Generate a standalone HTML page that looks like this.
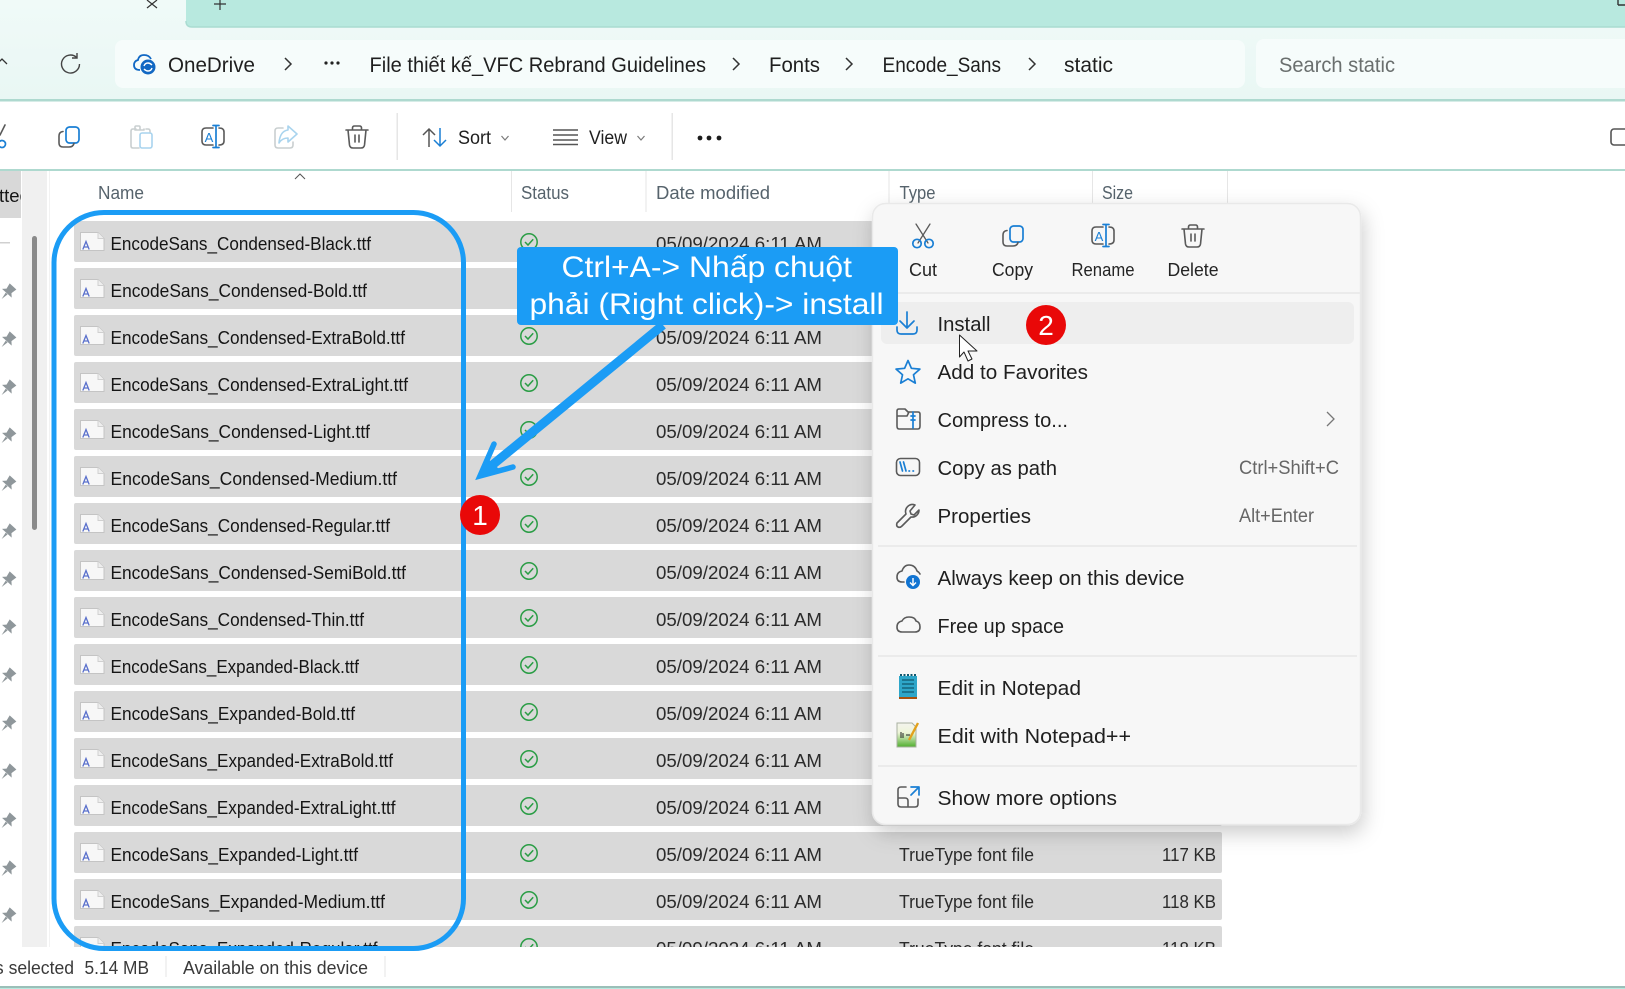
<!DOCTYPE html>
<html lang="vi"><head><meta charset="utf-8"><title>static</title>
<style>
html,body{margin:0;padding:0;background:#fff;width:1625px;height:989px;overflow:hidden}
svg{display:block;font-family:"Liberation Sans","Noto Sans CJK SC",sans-serif}
text{fill:#1c1c1c}
.a{font-size:21px;fill:#1f1f1f}
.h{font-size:18px;fill:#56636c}
.n{font-size:18.5px;fill:#151515}
.d{font-size:18.5px;fill:#2b2b2b}
.m{font-size:20.5px;fill:#1f1f1f}
.t{font-size:18px;fill:#242424}
.s{font-size:19px;fill:#666}
.b{font-size:18px;fill:#3a3a3a}
.c{font-size:30px;fill:#fff}
.i{fill:none;stroke:#5a5a5a;stroke-width:1.6;stroke-linecap:round;stroke-linejoin:round}
.u{fill:none;stroke:#1a7fd4;stroke-width:1.7;stroke-linecap:round;stroke-linejoin:round}
.l{fill:none;stroke:#c9cfd0;stroke-width:1.6;stroke-linecap:round;stroke-linejoin:round}
.lb{fill:none;stroke:#a9d4ee;stroke-width:1.6;stroke-linecap:round;stroke-linejoin:round}
</style></head><body>
<svg width="1625" height="989" viewBox="0 0 1625 989" xmlns="http://www.w3.org/2000/svg">
<defs>
<linearGradient id="tb" x1="0" y1="0" x2="0" y2="1"><stop offset="0" stop-color="#f0faf8"/><stop offset="1" stop-color="#e9f7f4"/></linearGradient>
<linearGradient id="npp" x1="0" y1="0" x2="0" y2="1"><stop offset="0" stop-color="#f4f4ee"/><stop offset=".4" stop-color="#eef5d8"/><stop offset="1" stop-color="#4fae2e"/></linearGradient>
<clipPath id="list"><rect x="48" y="170" width="1200" height="777"/></clipPath>
<clipPath id="side"><rect x="0" y="171" width="21" height="47"/></clipPath>
<filter id="sh" x="-10%" y="-10%" width="120%" height="120%"><feDropShadow dx="2" dy="8" stdDeviation="10" flood-color="#000" flood-opacity=".2"/></filter>
<g id="pin"><path fill="#8f979b" d="M-4.5,-7.5 h9 l-1.2,6 l3.2,3.2 h-13 l3.2,-3.2z M-1.3,2 h2.6 l-1.3,7.5z" transform="rotate(42)"/></g>
<g id="file"><path d="M80.5,232.5 H98 L104,238.5 V250.5 H80.5Z" fill="#f7f7f7" stroke="#c4c4c4"/><path d="M98,232.5 V238.5 H104" fill="#eee" stroke="#d0d0d0"/><path d="M82.8,249.5 L86,241.5 L89.2,249.5 M84,247 H88" fill="none" stroke="#5a70cc" stroke-width="1.3"/></g>
<g id="ok"><circle cx="529" cy="0" r="8.2" fill="none" stroke="#2a9d45" stroke-width="1.5"/><path d="M525,0 L528,3 L533.2,-2.8" fill="none" stroke="#2a9d45" stroke-width="1.5"/></g>
<g id="copy"><rect x="-3" y="-10" width="13" height="16" rx="3.5" class="u"/><path class="i" d="M-6,-5.5 Q-10,-5 -10,-1 V6 Q-10,10 -6,10 H0 Q4,10 5,6.5"/></g>
<g id="ren"><path class="i" d="M0,-9 H-7 Q-11,-9 -11,-5 V4 Q-11,8 -7,8 H0 M6,-9 Q11,-9 11,-5 V4 Q11,8 6,8"/><path class="u" d="M3,-11.5 V10.5 M0,-11.5 H6 M0,10.5 H6"/></g>
<g id="del"><path class="i" d="M-11,-7 H11 M-4.5,-7 V-9 Q-4.5,-11 -2.5,-11 H2.5 Q4.5,-11 4.5,-9 V-7 M-9,-7 L-7.5,8 Q-7,11 -4,11 H4 Q7,11 7.5,8 L9,-7 M-2,-2 V5 M2,-2 V5"/></g>
<g id="caret"><path d="M-3.5,-2 L0,2 L3.5,-2" fill="none" stroke="#7a7a7a" stroke-width="1.2"/></g>
<g id="chev"><path d="M-3,-6 L3,0 L-3,6" fill="none" stroke="#333" stroke-width="1.5"/></g>
</defs>

<!-- title bar -->
<rect width="1625" height="101" fill="url(#tb)"/>
<path d="M186,0 H1625 V27 H192 Q186,27 186,21Z" fill="#b8e9df"/>
<path d="M186,21 Q186,27 192,27 H1625" fill="none" stroke="#a9dcd1" stroke-width="1.5"/>
<path d="M147,0 L157,8 M157,0 L147,8" stroke="#333" stroke-width="1.2" fill="none"/>
<path d="M220,0 V10 M214,4 H226" stroke="#333" stroke-width="1.2" fill="none"/>
<path d="M1618,5 V0 M1618,5 H1625" stroke="#333" stroke-width="1.4" fill="none"/>

<!-- nav -->
<path d="M-3,64 L2,59 L7,64" fill="none" stroke="#333" stroke-width="1.3"/>
<path d="M76.5,57.3 A9,9 0 1 0 79.5,64" fill="none" stroke="#444" stroke-width="1.4"/>
<path d="M77,53 V58 H72" fill="none" stroke="#444" stroke-width="1.4"/>
<rect x="115" y="40" width="1130" height="48" rx="8" fill="#f6fcfb"/>
<rect x="1256" y="39" width="400" height="49" rx="8" fill="#f6fcfb"/>
<path d="M140,70 Q134,70 134,65 Q134,61 138,60 Q139,55 144,55 Q149,55 151,59" fill="none" stroke="#1168c4" stroke-width="1.8"/>
<circle cx="148" cy="67" r="7.5" fill="#1268c3"/>
<path d="M144,66 Q145,63 148,63 Q150,63 152,65 M152,68 Q151,71 148,71 Q146,71 144,69" fill="none" stroke="#fff" stroke-width="1.4"/>
<text x="168" y="72" class="a" textLength="87" lengthAdjust="spacingAndGlyphs">OneDrive</text>
<use href="#chev" x="288" y="64"/>
<circle cx="326" cy="63" r="1.6" fill="#222"/><circle cx="332" cy="63" r="1.6" fill="#222"/><circle cx="338" cy="63" r="1.6" fill="#222"/>
<text x="369.5" y="72" class="a" textLength="336.5" lengthAdjust="spacingAndGlyphs">File thiết kế_VFC Rebrand Guidelines</text>
<use href="#chev" x="736" y="64"/>
<text x="769" y="72" class="a" textLength="51" lengthAdjust="spacingAndGlyphs">Fonts</text>
<use href="#chev" x="849" y="64"/>
<text x="882.5" y="72" class="a" textLength="118.5" lengthAdjust="spacingAndGlyphs">Encode_Sans</text>
<use href="#chev" x="1032" y="64"/>
<text x="1064" y="72" class="a" textLength="49" lengthAdjust="spacingAndGlyphs">static</text>
<text x="1279" y="72" class="a" style="fill:#6a6f6e" textLength="116" lengthAdjust="spacingAndGlyphs">Search static</text>
<rect y="99" width="1625" height="2.5" fill="#aed9cf"/>

<!-- toolbar -->
<rect y="101.5" width="1625" height="67.5" fill="#fff"/>
<path d="M5,125 L0,135" class="i"/><circle cx="2" cy="144" r="3.5" class="u"/>
<use href="#copy" x="69" y="137"/>
<g class="l"><path d="M136,129 H133 Q131,129 131,131 V146 Q131,148 133,148 H139"/><path d="M140,129 V127 Q140,126 139,126 H136 Q135,126 135,127 V130 H144 V129"/><path d="M146,129 H148 Q150,129 150,131 V133"/></g>
<rect x="140" y="133" width="12" height="15" rx="2" class="lb"/>
<use href="#ren" x="213" y="137"/>
<text x="209" y="142" style="font-size:13px;fill:#1a7fd4" text-anchor="middle">A</text>
<path class="l" d="M283,128 H278 Q275,128 275,131 V145 Q275,148 278,148 H290 Q293,148 293,145 V142"/>
<path class="lb" d="M288,126 L297,134 L288,142 V138 Q282,138 279,143 Q280,131 288,130Z"/>
<use href="#del" x="357" y="137"/>
<rect x="396.5" y="113" width="1.5" height="47" fill="#e6e6e6"/>
<path d="M429,147 V129 M423,135 L429,129 L435,135" fill="none" stroke="#555" stroke-width="1.5"/>
<path d="M440,128 V146 M434,140 L440,146 L446,140" fill="none" stroke="#1a7fd4" stroke-width="1.5"/>
<text x="458" y="144" class="a" style="font-size:19px" textLength="33" lengthAdjust="spacingAndGlyphs">Sort</text>
<use href="#caret" x="505" y="138"/>
<path d="M553,130 H578 M553,135 H578 M553,140 H578 M553,144.5 H578" stroke="#555" stroke-width="1.4" fill="none"/>
<text x="589" y="144" class="a" style="font-size:19px" textLength="38" lengthAdjust="spacingAndGlyphs">View</text>
<use href="#caret" x="641" y="138"/>
<rect x="671.5" y="113" width="1.5" height="47" fill="#e6e6e6"/>
<circle cx="700" cy="138" r="2.4" fill="#1c1c1c"/><circle cx="709" cy="138" r="2.4" fill="#1c1c1c"/><circle cx="719" cy="138" r="2.4" fill="#1c1c1c"/>
<rect x="1611" y="129" width="20" height="16" rx="3" fill="none" stroke="#555" stroke-width="1.6"/>
<rect y="169" width="1625" height="2" fill="#aed9cf"/>

<!-- sidebar -->
<rect x="22" y="171" width="25" height="776" fill="#f0f0f0"/>
<rect x="49" y="171" width="1" height="776" fill="#f2f2f2"/>
<rect x="0" y="171" width="21" height="47" fill="#d8d8d8"/>
<g clip-path="url(#side)"><text x="-1" y="202" class="n">tted</text></g>
<rect x="0" y="242" width="10" height="1.5" fill="#d0d0d0"/>
<rect x="32" y="236" width="5" height="294" rx="2.5" fill="#8a8a8a"/>
<g transform="translate(-1,1)"><use href="#pin" x="9" y="291"/><use href="#pin" x="9" y="339"/><use href="#pin" x="9" y="387"/><use href="#pin" x="9" y="435"/><use href="#pin" x="9" y="483"/><use href="#pin" x="9" y="531"/><use href="#pin" x="9" y="579"/><use href="#pin" x="9" y="627"/><use href="#pin" x="9" y="675"/><use href="#pin" x="9" y="723"/><use href="#pin" x="9" y="771"/><use href="#pin" x="9" y="820"/><use href="#pin" x="9" y="868"/><use href="#pin" x="9" y="915"/></g>

<!-- header -->
<path d="M295,179 L300,174 L305,179" fill="none" stroke="#555" stroke-width="1"/>
<text x="98" y="199" class="h" textLength="46" lengthAdjust="spacingAndGlyphs">Name</text>
<text x="521" y="199" class="h" textLength="48" lengthAdjust="spacingAndGlyphs">Status</text>
<text x="656" y="199" class="h" textLength="114" lengthAdjust="spacingAndGlyphs">Date modified</text>
<text x="899.5" y="199" class="h" textLength="36" lengthAdjust="spacingAndGlyphs">Type</text>
<text x="1102" y="199" class="h" textLength="31" lengthAdjust="spacingAndGlyphs">Size</text>
<path d="M511.5,171 V212 M646,171 V212 M889,171 V212 M1092.5,171 V212 M1227.5,171 V212" stroke="#e6e6e6" stroke-width="1"/>

<!-- rows -->
<g clip-path="url(#list)">
<g fill="#d9d9d9">
<rect x="74" y="221" width="1148" height="41" rx="2"/><rect x="74" y="268" width="1148" height="41" rx="2"/><rect x="74" y="315" width="1148" height="41" rx="2"/><rect x="74" y="362" width="1148" height="41" rx="2"/><rect x="74" y="409" width="1148" height="41" rx="2"/><rect x="74" y="456" width="1148" height="41" rx="2"/><rect x="74" y="503" width="1148" height="41" rx="2"/><rect x="74" y="550" width="1148" height="41" rx="2"/><rect x="74" y="597" width="1148" height="41" rx="2"/><rect x="74" y="644" width="1148" height="41" rx="2"/><rect x="74" y="691" width="1148" height="41" rx="2"/><rect x="74" y="738" width="1148" height="41" rx="2"/><rect x="74" y="785" width="1148" height="41" rx="2"/><rect x="74" y="832" width="1148" height="41" rx="2"/><rect x="74" y="879" width="1148" height="41" rx="2"/><rect x="74" y="926" width="1148" height="41" rx="2"/>
</g>
<use href="#file"/><use href="#file" y="47"/><use href="#file" y="94"/><use href="#file" y="141"/><use href="#file" y="188"/><use href="#file" y="235"/><use href="#file" y="282"/><use href="#file" y="329"/><use href="#file" y="376"/><use href="#file" y="423"/><use href="#file" y="470"/><use href="#file" y="517"/><use href="#file" y="564"/><use href="#file" y="611"/><use href="#file" y="658"/><use href="#file" y="705"/>
<use href="#ok" y="242"/><use href="#ok" y="289"/><use href="#ok" y="336"/><use href="#ok" y="383"/><use href="#ok" y="430"/><use href="#ok" y="477"/><use href="#ok" y="524"/><use href="#ok" y="571"/><use href="#ok" y="618"/><use href="#ok" y="665"/><use href="#ok" y="712"/><use href="#ok" y="759"/><use href="#ok" y="806"/><use href="#ok" y="853"/><use href="#ok" y="900"/><use href="#ok" y="947"/>
<text x="110.5" y="250" class="n" textLength="260.5" lengthAdjust="spacingAndGlyphs">EncodeSans_Condensed-Black.ttf</text>
<text x="110.5" y="297" class="n" textLength="256.5" lengthAdjust="spacingAndGlyphs">EncodeSans_Condensed-Bold.ttf</text>
<text x="110.5" y="344" class="n" textLength="294.5" lengthAdjust="spacingAndGlyphs">EncodeSans_Condensed-ExtraBold.ttf</text>
<text x="110.5" y="391" class="n" textLength="297.5" lengthAdjust="spacingAndGlyphs">EncodeSans_Condensed-ExtraLight.ttf</text>
<text x="110.5" y="438" class="n" textLength="259.5" lengthAdjust="spacingAndGlyphs">EncodeSans_Condensed-Light.ttf</text>
<text x="110.5" y="485" class="n" textLength="286.5" lengthAdjust="spacingAndGlyphs">EncodeSans_Condensed-Medium.ttf</text>
<text x="110.5" y="532" class="n" textLength="279.5" lengthAdjust="spacingAndGlyphs">EncodeSans_Condensed-Regular.ttf</text>
<text x="110.5" y="579" class="n" textLength="295.5" lengthAdjust="spacingAndGlyphs">EncodeSans_Condensed-SemiBold.ttf</text>
<text x="110.5" y="626" class="n" textLength="253.5" lengthAdjust="spacingAndGlyphs">EncodeSans_Condensed-Thin.ttf</text>
<text x="110.5" y="673" class="n" textLength="248.5" lengthAdjust="spacingAndGlyphs">EncodeSans_Expanded-Black.ttf</text>
<text x="110.5" y="720" class="n" textLength="244.5" lengthAdjust="spacingAndGlyphs">EncodeSans_Expanded-Bold.ttf</text>
<text x="110.5" y="767" class="n" textLength="282.5" lengthAdjust="spacingAndGlyphs">EncodeSans_Expanded-ExtraBold.ttf</text>
<text x="110.5" y="814" class="n" textLength="285" lengthAdjust="spacingAndGlyphs">EncodeSans_Expanded-ExtraLight.ttf</text>
<text x="110.5" y="861" class="n" textLength="247.5" lengthAdjust="spacingAndGlyphs">EncodeSans_Expanded-Light.ttf</text>
<text x="110.5" y="908" class="n" textLength="274.5" lengthAdjust="spacingAndGlyphs">EncodeSans_Expanded-Medium.ttf</text>
<text x="110.5" y="955" class="n" textLength="267" lengthAdjust="spacingAndGlyphs">EncodeSans_Expanded-Regular.ttf</text>
<text x="656" y="250" class="d" textLength="166" lengthAdjust="spacingAndGlyphs">05/09/2024 6:11 AM</text>
<text x="656" y="344" class="d" textLength="166" lengthAdjust="spacingAndGlyphs">05/09/2024 6:11 AM</text>
<text x="656" y="391" class="d" textLength="166" lengthAdjust="spacingAndGlyphs">05/09/2024 6:11 AM</text>
<text x="656" y="438" class="d" textLength="166" lengthAdjust="spacingAndGlyphs">05/09/2024 6:11 AM</text>
<text x="656" y="485" class="d" textLength="166" lengthAdjust="spacingAndGlyphs">05/09/2024 6:11 AM</text>
<text x="656" y="532" class="d" textLength="166" lengthAdjust="spacingAndGlyphs">05/09/2024 6:11 AM</text>
<text x="656" y="579" class="d" textLength="166" lengthAdjust="spacingAndGlyphs">05/09/2024 6:11 AM</text>
<text x="656" y="626" class="d" textLength="166" lengthAdjust="spacingAndGlyphs">05/09/2024 6:11 AM</text>
<text x="656" y="673" class="d" textLength="166" lengthAdjust="spacingAndGlyphs">05/09/2024 6:11 AM</text>
<text x="656" y="720" class="d" textLength="166" lengthAdjust="spacingAndGlyphs">05/09/2024 6:11 AM</text>
<text x="656" y="767" class="d" textLength="166" lengthAdjust="spacingAndGlyphs">05/09/2024 6:11 AM</text>
<text x="656" y="814" class="d" textLength="166" lengthAdjust="spacingAndGlyphs">05/09/2024 6:11 AM</text>
<text x="656" y="861" class="d" textLength="166" lengthAdjust="spacingAndGlyphs">05/09/2024 6:11 AM</text>
<text x="656" y="908" class="d" textLength="166" lengthAdjust="spacingAndGlyphs">05/09/2024 6:11 AM</text>
<text x="656" y="955" class="d" textLength="166" lengthAdjust="spacingAndGlyphs">05/09/2024 6:11 AM</text>
<text x="899" y="861" class="d" textLength="135" lengthAdjust="spacingAndGlyphs">TrueType font file</text>
<text x="899" y="908" class="d" textLength="135" lengthAdjust="spacingAndGlyphs">TrueType font file</text>
<text x="899" y="955" class="d" textLength="135" lengthAdjust="spacingAndGlyphs">TrueType font file</text>
<text x="1162" y="861" class="d" textLength="54" lengthAdjust="spacingAndGlyphs">117 KB</text>
<text x="1162" y="908" class="d" textLength="54" lengthAdjust="spacingAndGlyphs">118 KB</text>
<text x="1162" y="955" class="d" textLength="54" lengthAdjust="spacingAndGlyphs">118 KB</text>
</g>

<!-- status bar -->
<text x="-9" y="974" class="b" textLength="83" lengthAdjust="spacingAndGlyphs">is selected</text>
<text x="84.5" y="974" class="b" textLength="64.5" lengthAdjust="spacingAndGlyphs">5.14 MB</text>
<rect x="165.5" y="956" width="1" height="21" fill="#e6e6e6"/>
<text x="183" y="974" class="b" textLength="185" lengthAdjust="spacingAndGlyphs">Available on this device</text>
<rect x="384.5" y="956" width="1" height="21" fill="#e6e6e6"/>
<rect y="986" width="1625" height="2" fill="#9bbfb8"/>
<rect y="988" width="1625" height="1" fill="#b8e9df"/>

<!-- context menu -->
<rect x="872.5" y="203.5" width="488" height="621" rx="13" fill="#f7f7f7" stroke="#e9e9e9" stroke-width="1.5" filter="url(#sh)"/>
<path class="i" d="M916,224 L928,243 M930,224 L918,243" style="stroke-width:1.3"/>
<circle cx="917" cy="243.5" r="4.2" class="u"/><circle cx="929" cy="243.5" r="4.2" class="u"/>
<text x="909" y="276" class="t" textLength="28" lengthAdjust="spacingAndGlyphs">Cut</text>
<use href="#copy" x="1013" y="236"/>
<text x="992" y="276" class="t" textLength="41" lengthAdjust="spacingAndGlyphs">Copy</text>
<use href="#ren" x="1103" y="236"/>
<text x="1099" y="241" style="font-size:13px;fill:#1a7fd4" text-anchor="middle">A</text>
<text x="1071.5" y="276" class="t" textLength="63" lengthAdjust="spacingAndGlyphs">Rename</text>
<use href="#del" x="1193" y="236"/>
<text x="1167.5" y="276" class="t" textLength="51" lengthAdjust="spacingAndGlyphs">Delete</text>
<rect x="873" y="292" width="487" height="2" fill="#ebebeb"/>
<rect x="881" y="302" width="473" height="42" rx="6" fill="#eeeeee"/>

<path class="u" d="M907,312 V328 M900,321 L907,328 L914,321 M897,327 V330 Q897,334 901,334 H913 Q917,334 917,330 V327"/>
<text x="937.5" y="331" class="m" textLength="53" lengthAdjust="spacingAndGlyphs">Install</text>
<polygon class="u" points="908,360.5 911.4,368.3 919.9,369.1 913.5,374.8 915.3,383.1 908,378.8 900.7,383.1 902.5,374.8 896.1,369.1 904.6,368.3"/>
<text x="937.5" y="379" class="m" textLength="150.5" lengthAdjust="spacingAndGlyphs">Add to Favorites</text>
<path class="i" d="M897,426 V411 Q897,409 899,409 H905 L908,412 H918 Q920,412 920,414 V426 Q920,429 918,429 H899 Q897,429 897,426Z M897,416 H907 L909,412"/>
<path class="u" d="M913,412 V428 M911,416 H915 M911,420 H915"/>
<text x="937.5" y="427" class="m" textLength="130.5" lengthAdjust="spacingAndGlyphs">Compress to...</text>
<path d="M1327,412 L1334,419 L1327,426" fill="none" stroke="#777" stroke-width="1.3"/>
<rect x="896.5" y="458.5" width="23" height="17" rx="4" class="i"/>
<path class="u" d="M900,462 L902.5,471 M903.5,462 L906,471 M909,471 H909.5 M913,471 H913.5"/>
<text x="937.5" y="475" class="m" textLength="119.5" lengthAdjust="spacingAndGlyphs">Copy as path</text>
<text x="1239" y="474" class="s" textLength="100" lengthAdjust="spacingAndGlyphs">Ctrl+Shift+C</text>
<path class="i" d="M919,510 L914,515 L911,514 L910,511 L915,505 A7,7 0 0 0 906,514 L897,523 Q896,526 898,527 Q900,528 902,526 L911,517 A7,7 0 0 0 919,510Z"/>
<text x="937.5" y="523" class="m" textLength="93.5" lengthAdjust="spacingAndGlyphs">Properties</text>
<text x="1239" y="522" class="s" textLength="75" lengthAdjust="spacingAndGlyphs">Alt+Enter</text>
<rect x="878" y="545" width="479" height="2" fill="#ebebeb"/>

<path class="i" d="M904,582 H902 Q897,582 897,577 Q897,572 902,571 Q904,565 909,565 Q915,565 917,571 Q919,572 920,574"/>
<circle cx="913" cy="582" r="7" fill="#1174d2"/><path d="M913,578 V585 M910,582.5 L913,585.5 L916,582.5" fill="none" stroke="#fff" stroke-width="1.4"/>
<text x="937.5" y="585" class="m" textLength="247" lengthAdjust="spacingAndGlyphs">Always keep on this device</text>
<path class="i" d="M902,632 Q897,632 897,627 Q897,622 902,621 Q904,617 909,617 Q915,617 916,621 Q920,622 920,627 Q920,632 915,632Z"/>
<text x="937.5" y="633" class="m" textLength="126.5" lengthAdjust="spacingAndGlyphs">Free up space</text>
<rect x="878" y="655" width="479" height="2" fill="#ebebeb"/>

<rect x="899" y="676" width="18" height="21" fill="#2ea6c9"/>
<rect x="899" y="697" width="18" height="2" fill="#a8510f"/>
<path d="M902,680 H914 M902,684 H914 M902,688 H914 M902,692 H914" stroke="#10586f" stroke-width="1.3"/>
<path d="M900,675 H916" stroke="#10586f" stroke-width="2" stroke-dasharray="2 1.5"/>
<text x="937.5" y="695" class="m" textLength="143.5" lengthAdjust="spacingAndGlyphs">Edit in Notepad</text>
<path d="M897,723 H912 L916,727 V747 H897Z" fill="url(#npp)" stroke="#a8b0a0"/>
<path d="M901,732 V738 M903,733 V738 M906,735 H910" stroke="#222" stroke-width="1"/>
<path d="M918,723 L909,740" stroke="#e2a11c" stroke-width="2.4"/>
<text x="937.5" y="743" class="m" textLength="193.5" lengthAdjust="spacingAndGlyphs">Edit with Notepad++</text>
<rect x="878" y="765" width="479" height="2" fill="#ebebeb"/>

<path class="i" d="M906,787 H901 Q898,787 898,790 V804 Q898,807 901,807 H915 Q918,807 918,804 V799 M898,798 H905 Q908,798 908,801 V807"/>
<path class="u" d="M911,787 H919 V795 M919,787 L911,795"/>
<text x="937.5" y="805" class="m" textLength="179.5" lengthAdjust="spacingAndGlyphs">Show more options</text>

<!-- cursor -->
<path d="M959.5,335 V357 L964,352 L968,361 L972,359 L968,351 L977,351Z" fill="#fff" stroke="#222" stroke-width="1" stroke-linejoin="round"/>

<!-- blue outline -->
<rect x="54" y="212.5" width="409.5" height="736" rx="50" fill="none" stroke="#1b9cf5" stroke-width="5"/>

<!-- arrow -->
<path d="M663,325 L485,471" stroke="#1b9cf5" stroke-width="9" fill="none"/>
<path d="M494,444 L480,476 L513,467" fill="none" stroke="#1b9cf5" stroke-width="5.5" stroke-linecap="round" stroke-linejoin="miter"/>
<polygon points="478,477 487,458 499,469" fill="#1b9cf5"/>

<!-- callout -->
<rect x="517" y="247" width="381" height="78" rx="4" fill="#1b9cf5"/>
<text x="561.5" y="277" class="c" textLength="290.5" lengthAdjust="spacingAndGlyphs">Ctrl+A-&gt; Nhấp chuột</text>
<text x="529.5" y="314" class="c" textLength="354" lengthAdjust="spacingAndGlyphs">phải (Right click)-&gt; install</text>

<!-- badges -->
<circle cx="480" cy="515" r="20" fill="#e90808"/>
<text x="480" y="525" text-anchor="middle" style="font-size:28px;fill:#fff">1</text>
<circle cx="1046" cy="325" r="20" fill="#e90808"/>
<text x="1046" y="335" text-anchor="middle" style="font-size:28px;fill:#fff">2</text>
</svg>
</body></html>
